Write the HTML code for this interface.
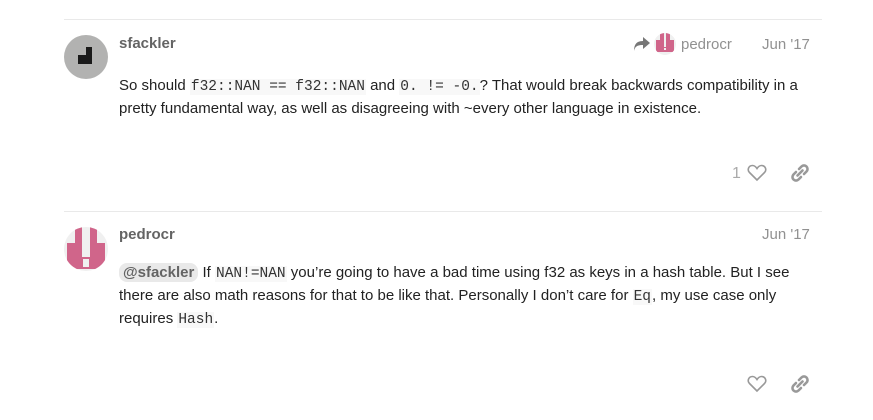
<!DOCTYPE html>
<html><head><style>
body{margin:0;width:873px;height:420px;background:#fff;font-family:"Liberation Sans",sans-serif;position:relative;overflow:hidden;color:#222}
.hr{position:absolute;left:64px;width:758px;height:1px;background:#e9e9e9}
.a{position:absolute}
.name{position:absolute;left:119px;font-weight:bold;font-size:15px;color:#646464}
.date{position:absolute;font-size:15px;color:#919191}
.p{position:absolute;left:119px;font-size:15px;line-height:23px;width:700px}
code{font-family:"Liberation Mono",monospace;font-size:14.5px;line-height:1;background:#f8f8f8;color:#333;padding:0 1px}
.men{background:#e9e9e9;border-radius:8px;font-weight:bold;color:#646464;padding:1px 4px;line-height:1}
</style></head><body>
<div class="hr" style="top:19px"></div>
<svg class="a" style="left:64px;top:35px" width="44" height="44"><circle cx="22" cy="22" r="22" fill="#b2b2b1"/><rect x="22" y="12" width="6" height="9" fill="#1a1a1a"/><rect x="14" y="20" width="14" height="9" fill="#1a1a1a"/></svg>
<div class="name" style="top:35px">sfackler</div>
<svg class="a" style="left:633px;top:36px" width="18" height="16" viewBox="0 0 18 16"><path d="M10 1 L17 7 L10 13 V9 C5 9 2 10 1 15 C1 8 4 5 10 5 Z" fill="#777"/></svg>
<svg class="a" style="left:654px;top:33px" width="22" height="22"><clipPath id="c1"><circle cx="11" cy="11" r="11"/></clipPath><g clip-path="url(#c1)"><rect width="22" height="22" fill="#f0f0f0"/><rect x="2" y="7" width="4" height="12" fill="#d0658a"/><rect x="6" y="0" width="4" height="19" fill="#d0658a"/><rect x="12" y="0" width="4" height="19" fill="#d0658a"/><rect x="16" y="7" width="4" height="12" fill="#d0658a"/><rect x="9" y="14" width="4" height="5" fill="#d0658a"/><rect x="10" y="15" width="2" height="2" fill="#f0f0f0"/></g></svg>
<div class="date" style="left:681px;top:36px">pedrocr</div>
<div class="date" style="left:762px;top:36px">Jun '17</div>
<div class="p" style="top:74px">So should <code>f32::NAN == f32::NAN</code> and <code>0. != -0.</code>? That would break backwards compatibility in a pretty fundamental way, as well as disagreeing with ~every other language in existence.</div>
<div class="date" style="left:732px;top:165px;font-size:16px;color:#aaa">1</div>
<svg class="a" style="left:747px;top:164px" width="20" height="18" viewBox="0 0 20 18"><path d="M10 16 L2.5 8.5 C0 6 1.5 1.5 5.5 1.5 C7.5 1.5 9 3 10 4.5 C11 3 12.5 1.5 14.5 1.5 C18.5 1.5 20 6 17.5 8.5 Z" fill="none" stroke="#999" stroke-width="1.6"/></svg>
<svg class="a" style="left:791px;top:164px" width="18" height="18" viewBox="0 0 18 18"><g fill="none" stroke="#999" stroke-width="2.6" stroke-linecap="round"><path d="M8 5 L10.5 2.5 a3 3 0 0 1 5 5 L13 10"/><path d="M10 13 L7.5 15.5 a3 3 0 0 1 -5 -5 L5 8"/><path d="M6.5 11.5 L11.5 6.5"/></g></svg>
<div class="hr" style="top:211px"></div>
<svg class="a" style="left:64px;top:227px" width="44" height="44"><clipPath id="c2"><circle cx="22" cy="22" r="22"/></clipPath><g clip-path="url(#c2)"><rect width="44" height="44" fill="#f0f0f0"/><rect x="3" y="16" width="8" height="26" fill="#d0658a"/><rect x="11" y="0" width="7" height="42" fill="#d0658a"/><rect x="26" y="0" width="7" height="42" fill="#d0658a"/><rect x="33" y="16" width="8" height="26" fill="#d0658a"/><rect x="18" y="30" width="8" height="12" fill="#d0658a"/><rect x="19" y="32" width="6" height="8" fill="#f0f0f0"/></g></svg>
<div class="name" style="top:226px">pedrocr</div>
<div class="date" style="left:762px;top:226px">Jun '17</div>
<div class="p" style="top:261px"><span class="men">@sfackler</span> If <code>NAN!=NAN</code> you’re going to have a bad time using f32 as keys in a hash table. But I see there are also math reasons for that to be like that. Personally I don’t care for <code>Eq</code>, my use case only requires <code>Hash</code>.</div>
<svg class="a" style="left:747px;top:375px" width="20" height="18" viewBox="0 0 20 18"><path d="M10 16 L2.5 8.5 C0 6 1.5 1.5 5.5 1.5 C7.5 1.5 9 3 10 4.5 C11 3 12.5 1.5 14.5 1.5 C18.5 1.5 20 6 17.5 8.5 Z" fill="none" stroke="#999" stroke-width="1.6"/></svg>
<svg class="a" style="left:791px;top:375px" width="18" height="18" viewBox="0 0 18 18"><g fill="none" stroke="#999" stroke-width="2.6" stroke-linecap="round"><path d="M8 5 L10.5 2.5 a3 3 0 0 1 5 5 L13 10"/><path d="M10 13 L7.5 15.5 a3 3 0 0 1 -5 -5 L5 8"/><path d="M6.5 11.5 L11.5 6.5"/></g></svg>
</body></html>
